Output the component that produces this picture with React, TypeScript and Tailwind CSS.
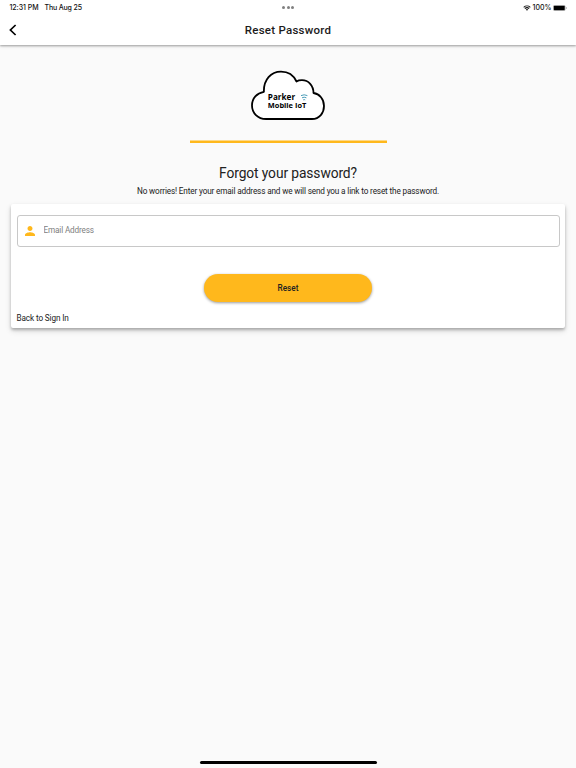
import React, { useState } from "react";
import clsx from "clsx";

function WifiIcon({ className }: { className?: string }) {
	return (
		<svg viewBox="0 0 16 12" className={className} aria-hidden="true">
			<path
				d="M1.4 4.6a9.6 9.6 0 0 1 13.2 0M3.8 7.2a6 6 0 0 1 8.4 0"
				fill="none"
				stroke="currentColor"
				strokeWidth="2.1"
			/>
			<path d="M8 11.6 5.6 9.1a3.5 3.5 0 0 1 4.8 0z" fill="currentColor" />
		</svg>
	);
}

function StatusBar() {
	return (
		<div className="grid h-[14px] grid-cols-3 items-center pr-[9px] pl-[9.5px] font-['Inter',sans-serif] text-[7px] leading-[15px] font-medium text-[#111]">
			<div className="flex gap-[6px] whitespace-nowrap">
				<span className="tracking-[-0.05px]">12:31 PM</span>
				<span className="tracking-[-0.15px]">Thu Aug 25</span>
			</div>
			<div className="flex justify-center gap-[1.5px]">
				<span className="size-[3px] rounded-full bg-[#808080]" />
				<span className="size-[3px] rounded-full bg-[#808080]" />
				<span className="size-[3px] rounded-full bg-[#808080]" />
			</div>
			<div className="flex items-center justify-end">
				<WifiIcon className="mr-[2px] h-[6px] w-[8px]" />
				<span className="mr-[1.5px]">100%</span>
				{/* Battery */}
				<svg viewBox="0 0 28 12" className="h-[6px] w-[14px]" aria-hidden="true">
					<rect x="0.5" y="0.5" width="24" height="11" rx="3" fill="none" stroke="#888" />
					<rect x="1.5" y="1.5" width="22" height="9" rx="1.5" fill="#000" />
					<path d="M26 4v4c1-.4 1.5-1 1.5-2S27 4.4 26 4z" fill="#888" />
				</svg>
			</div>
		</div>
	);
}

function Header({ title }: { title: string }) {
	return (
		<header className="h-[45px] w-full bg-white shadow-[0_1px_2px_rgba(0,0,0,0.3),0_1px_4px_rgba(0,0,0,0.12)]">
			<StatusBar />
			<div className="grid h-[31px] grid-cols-[40px_1fr_40px] items-center">
				<button type="button" aria-label="Back" className="pl-[9px]">
					<svg viewBox="0 0 8 12" className="h-[12px] w-[8px]">
						<path d="M6.6 1 1.4 6l5.2 5" fill="none" stroke="#000" strokeWidth="1.7" />
					</svg>
				</button>
				<h1 className="text-center text-[11.5px] leading-[14px] font-medium tracking-[0.25px] text-[#1c1c1c]">
					{title}
				</h1>
			</div>
		</header>
	);
}

function Logo() {
	return (
		<svg
			viewBox="0 0 76 52"
			className="h-[52px] w-[76px] font-['Open_Sans',sans-serif] font-bold"
			role="img"
			aria-label="Parker Mobile IoT">
			<path
				d="M16 50H62C69.5 50 74 43.8 74 37C74 30 69.5 25 63.5 24C63.5 16.5 58.5 11.2 52 11.2C49.8 11.2 48 11.5 46.5 12.5C43.5 6 37.5 2.6 31 2.6C21 2.6 13.5 10.5 13.9 22.8C6.9 24 2 29.3 2 36.5C2 44 7.8 50 16 50Z"
				fill="#fff"
				stroke="#000"
				strokeWidth="1.8"
				strokeLinejoin="round"
			/>
			<text x="17.8" y="30.5" fontSize="8.4" textLength="27.3" lengthAdjust="spacingAndGlyphs">
				Parker
			</text>
			<text x="17.8" y="38.7" fontSize="7" textLength="38.5" lengthAdjust="spacingAndGlyphs">
				Mobile IoT
			</text>
			<g fill="none" stroke="#4b9db8" strokeWidth="1">
				<path d="M51 26.6q3.2-1.6 6.4 0M52 28.8q2.2-1.2 4.4 0M53.2 30.9q1-.6 2 0" />
			</g>
		</svg>
	);
}

type EmailFieldProps = {
	value: string;
	onChange: (value: string) => void;
};

function EmailField({ value, onChange }: EmailFieldProps) {
	return (
		<label className="flex h-8 items-center rounded-[3px] border border-[#c8c8c8] pl-[7.5px]">
			<svg viewBox="4 4 16 16" className="size-[10px] shrink-0 text-[#ffb81c]" aria-hidden="true">
				<path
					d="M12 12c2.21 0 4-1.79 4-4s-1.79-4-4-4-4 1.79-4 4 1.79 4 4 4zm0 2c-2.67 0-8 1.34-8 4v2h16v-2c0-2.66-5.33-4-8-4z"
					fill="currentColor"
				/>
			</svg>
			<input
				type="email"
				value={value}
				onChange={(e) => onChange(e.target.value)}
				placeholder="Email Address"
				className="ml-[8.5px] h-full flex-1 bg-transparent pb-[3px] text-[8.2px] tracking-[-0.15px] outline-none placeholder:text-[#808080]"
			/>
		</label>
	);
}

export default function App() {
	const [email, setEmail] = useState("");

	return (
		<div className="flex h-screen flex-col bg-[#fafafa] font-['Roboto',sans-serif] text-[#212121]">
			<Header title="Reset Password" />

			<main className="flex flex-1 flex-col items-center px-[11px] pt-[24px]">
				<Logo />
				<div className="mt-[19px] h-[3px] w-[197px] border-t border-[#fdd98a] bg-[#ffb81c]" />

				<h2 className="mt-[22px] text-[13.8px] leading-[17px] tracking-[-0.1px]">
					Forgot your password?
				</h2>
				<p className="mt-[4px] text-[8.2px] leading-[10px] tracking-[-0.148px]">
					No worries! Enter your email address and we will send you a link to reset the password.
				</p>

				{/* Form card */}
				<form
					onSubmit={(e) => e.preventDefault()}
					className="mt-[8px] flex h-[124px] w-full flex-col rounded-[2px] bg-white px-[5.5px] pt-[11px] shadow-[0_2px_3px_rgba(0,0,0,0.25),0_3px_6px_rgba(0,0,0,0.12)]">
					<EmailField value={email} onChange={setEmail} />
					<button
						type="submit"
						className={clsx(
							"mt-[27.4px] h-[28px] w-[168.5px] self-center rounded-full bg-[#ffb81c]",
							"text-[8.2px] font-medium tracking-[0.05px] shadow-[0_1px_3px_rgba(0,0,0,0.4)]"
						)}>
						Reset
					</button>
					<a href="#" className="mt-[10.6px] self-start text-[8.2px] leading-[10px] tracking-[-0.12px]">
						Back to Sign In
					</a>
				</form>
			</main>

			{/* Home indicator */}
			<div className="mb-[4.5px] h-[3px] w-[177px] self-center rounded-full bg-black" />
		</div>
	);
}
